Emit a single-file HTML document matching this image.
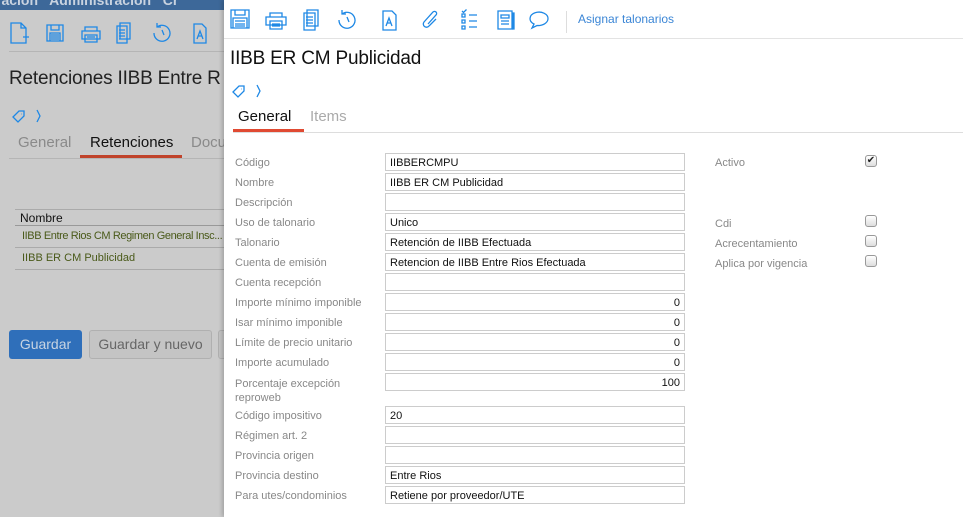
<!DOCTYPE html>
<html><head><meta charset="utf-8"><style>
*{box-sizing:border-box;margin:0;padding:0}
body{width:963px;height:517px;overflow:hidden;background:#cbcbcb;font-family:"Liberation Sans",sans-serif;position:relative}
.a{position:absolute}
.topbar{left:0;top:0;width:224px;height:10px;background:#3d6899;overflow:hidden;color:#c9d3e0;font-weight:bold;font-size:14px;line-height:0}
.ic{position:absolute;stroke:#1e88e5;fill:none;stroke-width:1.3}
.panel{left:224px;top:0;width:739px;height:517px;background:#fff;box-shadow:-2px 0 4px rgba(0,0,0,.2)}
.lbl{position:absolute;left:11px;font-size:11px;color:#888;margin-top:1px}
.in{position:absolute;left:161px;width:300px;height:18px;border:1px solid #ccc;font-size:11px;color:#111;padding:3px 4px 1px;line-height:13px}
.num{text-align:right}
.cb{position:absolute;left:641px;width:12px;height:12px;border:1px solid #999;border-radius:3px;background:linear-gradient(#fff,#ddd)}
</style></head><body>
<div class="a topbar"><span style="position:absolute;left:-4px;top:0">ración &nbsp; Administración &nbsp; Cr</span></div>
<svg class="ic" style="left:10px;top:22px" width="200" height="22" viewBox="0 0 200 22">
<path d="M1 1h10l5 5v15H1z M11 1v5h5 M13 15h6 M16 12v6"/>
<path d="M37 3h16v16H37z M41 3v5h8V3 M40 11h10v8H40z M41 13h8M41 15h8M41 17h8"/>
<path d="M75 5h12v4H75z M72 9h18v8H72z M75 13h12v7H75z M77 15h8M77 17h8"/>
<path d="M110 1h10v16h-10z M107 4h10v17h-10z M109 8h6M109 11h6M109 14h6M109 17h6"/>
<path d="M147 5a8 8 0 1 1-3 6 M147 1l0 4h4 M152 8l2 5"/>
<path d="M184 2h8l4 4v15h-12z M187 17l3-8 3 8 M188 14h4"/>
</svg>
<div class="a" style="left:9px;top:51px;width:215px;height:1px;background:#b5b5b5"></div>
<div class="a" style="left:9px;top:68px;font-size:19px;color:#222;white-space:nowrap;letter-spacing:-0.2px">Retenciones IIBB Entre R</div>
<svg class="ic" style="left:11px;top:108px" width="35" height="16"><path d="M2 9l6-6h5v5l-6 6z M10 6h.5"/><path d="M26 2l3 6-3 6"/></svg>
<div class="a" style="left:18px;top:134px;font-size:15px;color:#8a8a8a">General</div>
<div class="a" style="left:90px;top:134px;font-size:15px;color:#111">Retenciones</div>
<div class="a" style="left:191px;top:134px;font-size:15px;color:#8a8a8a">Docu</div>
<div class="a" style="left:80px;top:155px;width:102px;height:3px;background:#c0432b"></div>
<div class="a" style="left:9px;top:158px;width:215px;height:1px;background:#b5b5b5"></div>
<div class="a" style="left:15px;top:209px;width:209px;height:1px;background:#aaa"></div>
<div class="a" style="left:20px;top:211px;font-size:12px;color:#111">Nombre</div>
<div class="a" style="left:15px;top:225px;width:209px;height:1px;background:#999"></div>
<div class="a" style="left:22px;top:230px;font-size:11px;color:#4a5a1a;white-space:nowrap;letter-spacing:-0.4px">IIBB Entre Rios CM Regimen General Insc...</div>
<div class="a" style="left:15px;top:247px;width:209px;height:1px;background:#aaa"></div>
<div class="a" style="left:22px;top:252px;font-size:11px;color:#4a5a1a">IIBB ER CM Publicidad</div>
<div class="a" style="left:15px;top:269px;width:209px;height:1px;background:#aaa"></div>
<div class="a" style="left:9px;top:330px;width:73px;height:29px;background:#2f6fba;border-radius:3px;color:#c8d4e2;font-size:14px;text-align:center;line-height:28px">Guardar</div>
<div class="a" style="left:89px;top:330px;width:123px;height:29px;background:#c4c4c4;border:1px solid #b0b0b0;border-radius:3px;color:#666;font-size:14px;text-align:center;line-height:27px">Guardar y nuevo</div>
<div class="a" style="left:218px;top:330px;width:10px;height:29px;background:#c4c4c4;border:1px solid #b0b0b0;border-radius:3px"></div>

<div class="a panel">
<svg class="ic" style="left:6px;top:9px" width="320" height="22" viewBox="0 0 320 22">
<path d="M1 1h18v18H1z M5 1v5h10V1 M3 9h14v10H3z M5 12h10M5 15h10M5 17h10"/>
<path d="M40 4h12v4H40z M36 8h20v8H36z M40 12h12v8H40z M42 15h8M42 17h8"/>
<path d="M77 1h11v16H77z M74 4h11v17H74z M76 8h7M76 11h7M76 14h7M76 17h7"/>
<path d="M112 5a8 8 0 1 1-3 6 M112 1l0 4h4 M117 8l2 5"/>
<path d="M153 2h9l4 4v15h-13z M156 17l3-8 3 8 M157 14h4"/>
<path d="M206 10l-7 7a3 3 0 0 1-5-4l9-10a2 2 0 0 1 3 3l-8 9"/>
<path d="M232 5h3v3h-3z M232 11h3v3h-3z M232 17h3v3h-3z M239 6h8M239 12h8M239 18h8 M232 2l1.5 1.5 3-3"/>
<path d="M268 2h14v18H268z M271 6h8v3h-8z M271 12h8M271 15h8" /><path d="M282 4h2v16h-2" fill="#1e88e5"/>
<path d="M318 10a9 6.5 0 1 0-14 5l-2 4 5-2.5a10 7 0 0 0 11-6.5"/>
</svg>
<div class="a" style="left:342px;top:11px;width:1px;height:22px;background:#ddd"></div>
<div class="a" style="left:354px;top:12px;font-size:12px;color:#3b86d6">Asignar talonarios</div>
<div class="a" style="left:0;top:38px;width:739px;height:1px;background:#e3e3e3"></div>
<div class="a" style="left:6px;top:48px;font-size:19px;color:#111;letter-spacing:-0.2px">IIBB ER CM Publicidad</div>
<svg class="ic" style="left:7px;top:83px" width="35" height="16" stroke-width="1"><path d="M2 9l6-6h5v5l-6 6z M10 6h.5"/><path d="M26 2l3 6-3 6"/></svg>
<div class="a" style="left:14px;top:108px;font-size:15px;color:#111">General</div>
<div class="a" style="left:86px;top:108px;font-size:15px;color:#aaa">Items</div>
<div class="a" style="left:9px;top:129px;width:71px;height:3px;background:#e04a32"></div>
<div class="a" style="left:9px;top:132px;width:730px;height:1px;background:#ddd"></div>

<div class="lbl" style="top:156px">Código</div><div class="in" style="top:153px">IIBBERCMPU</div>
<div class="lbl" style="top:176px">Nombre</div><div class="in" style="top:173px">IIBB ER CM Publicidad</div>
<div class="lbl" style="top:196px">Descripción</div><div class="in" style="top:193px"></div>
<div class="lbl" style="top:216px">Uso de talonario</div><div class="in" style="top:213px">Unico</div>
<div class="lbl" style="top:236px">Talonario</div><div class="in" style="top:233px">Retención de IIBB Efectuada</div>
<div class="lbl" style="top:256px">Cuenta de emisión</div><div class="in" style="top:253px">Retencion de IIBB Entre Rios Efectuada</div>
<div class="lbl" style="top:276px">Cuenta recepción</div><div class="in" style="top:273px"></div>
<div class="lbl" style="top:296px">Importe mínimo imponible</div><div class="in num" style="top:293px">0</div>
<div class="lbl" style="top:316px">Isar mínimo imponible</div><div class="in num" style="top:313px">0</div>
<div class="lbl" style="top:336px">Límite de precio unitario</div><div class="in num" style="top:333px">0</div>
<div class="lbl" style="top:356px">Importe acumulado</div><div class="in num" style="top:353px">0</div>
<div class="lbl" style="top:376px;line-height:14px">Porcentaje excepción<br>reproweb</div><div class="in num" style="top:373px">100</div>
<div class="lbl" style="top:409px">Código impositivo</div><div class="in" style="top:406px">20</div>
<div class="lbl" style="top:429px">Régimen art. 2</div><div class="in" style="top:426px"></div>
<div class="lbl" style="top:449px">Provincia origen</div><div class="in" style="top:446px"></div>
<div class="lbl" style="top:469px">Provincia destino</div><div class="in" style="top:466px">Entre Rios</div>
<div class="lbl" style="top:489px">Para utes/condominios</div><div class="in" style="top:486px">Retiene por proveedor/UTE</div>

<div class="lbl" style="left:491px;top:156px">Activo</div>
<div class="cb" style="top:155px;font-size:10px;line-height:10px;text-align:center;color:#222">✔</div>
<div class="lbl" style="left:491px;top:217px">Cdi</div><div class="cb" style="top:215px"></div>
<div class="lbl" style="left:491px;top:237px">Acrecentamiento</div><div class="cb" style="top:235px"></div>
<div class="lbl" style="left:491px;top:257px">Aplica por vigencia</div><div class="cb" style="top:255px"></div>
</div>
</body></html>
